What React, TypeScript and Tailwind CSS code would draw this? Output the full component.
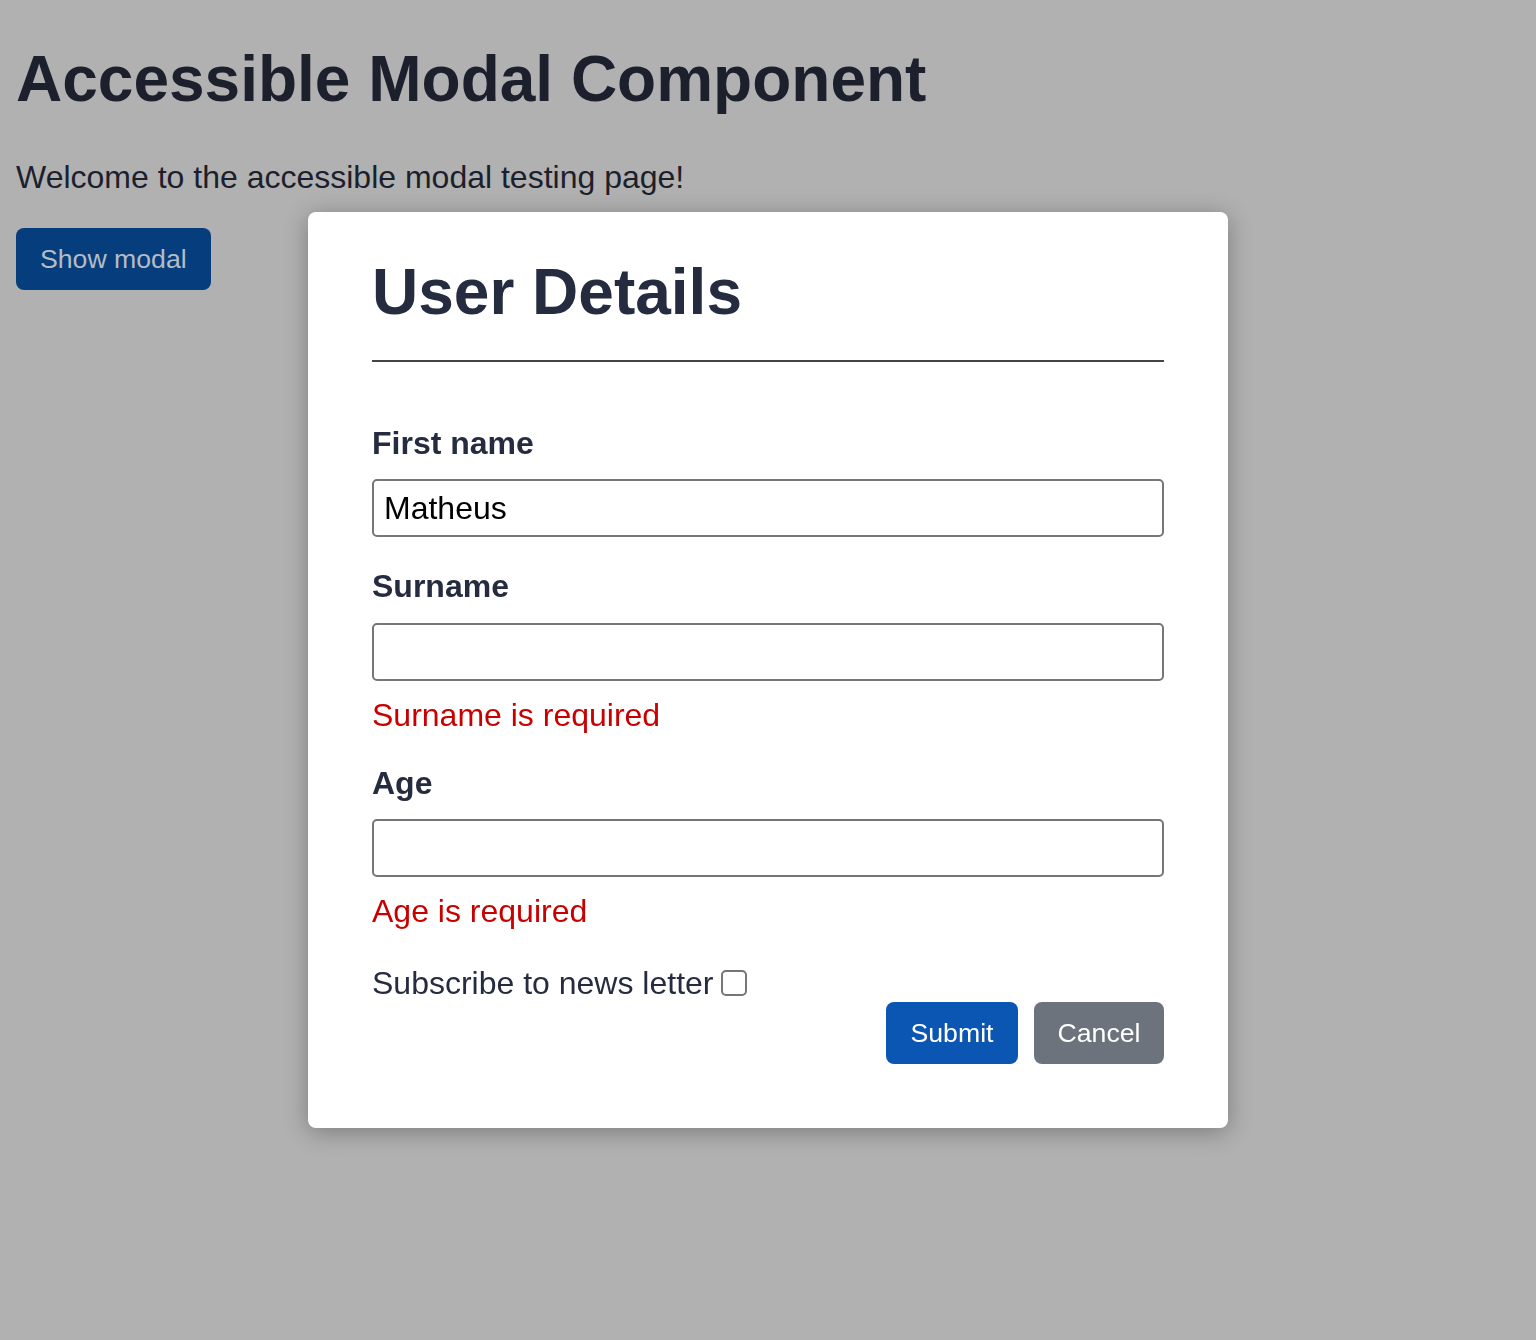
import React from "react";

export default function App() {
  const font = { fontFamily: '"Liberation Sans", Arial, Helvetica, sans-serif' };
  return (
    <div className="relative w-full min-h-[1340px] bg-[#b1b1b1]" style={font}>
      <div className="px-[16px] pt-[42px] flex flex-col items-start">
        <h1 className="text-[64px] leading-[74px] font-bold text-[#1c1f2c]">Accessible Modal Component</h1>
        <p className="mt-[43px] text-[32px] leading-[37px] text-[#1c1f2c]">Welcome to the accessible modal testing page!</p>
        <button className="mt-[32px] h-[62px] px-[24px] rounded-[8px] bg-[#063d7c] text-[26.67px] leading-[31px] text-[#b3bcc7]">
          Show modal
        </button>
      </div>

      <div className="fixed inset-0 flex items-center justify-center">
        <div className="w-[920px] bg-white rounded-[8px] shadow-[0_4px_24px_rgba(0,0,0,0.3)] px-[64px] pt-[43px] pb-[64px] flex flex-col">
          <h2 className="text-[64px] leading-[74px] font-bold text-[#262c40] pb-[31px] border-b-2 border-[#444]">User Details</h2>

          <label className="mt-[63px] text-[32px] leading-[37px] font-bold text-[#262c40]">First name</label>
          <div className="mt-[17px] h-[58px] border-2 border-[#767676] rounded-[5px] px-[10px] flex items-center text-[32px] leading-[37px] text-black">
            Matheus
          </div>

          <label className="mt-[31px] text-[32px] leading-[37px] font-bold text-[#262c40]">Surname</label>
          <div className="mt-[18px] h-[58px] border-2 border-[#767676] rounded-[5px]" />
          <div className="mt-[16px] text-[32px] leading-[37px] text-[#c80000]">Surname is required</div>

          <label className="mt-[31px] text-[32px] leading-[37px] font-bold text-[#262c40]">Age</label>
          <div className="mt-[17px] h-[58px] border-2 border-[#767676] rounded-[5px]" />
          <div className="mt-[16px] text-[32px] leading-[37px] text-[#c80000]">Age is required</div>

          <div className="mt-[35px] flex items-start text-[32px] leading-[37px] text-[#262c40]">
            <span>Subscribe to news letter</span>
            <span className="ml-[7px] mt-[5px] w-[26px] h-[26px] border-2 border-[#767676] rounded-[5px] bg-white" />
          </div>

          <div className="flex justify-end gap-[16px]">
            <button className="h-[62px] w-[132px] rounded-[8px] bg-[#0b56b2] text-white text-[26.67px] leading-[31px]">Submit</button>
            <button className="h-[62px] w-[130px] rounded-[8px] bg-[#6c737c] text-white text-[26.67px] leading-[31px]">Cancel</button>
          </div>
        </div>
      </div>
    </div>
  );
}
